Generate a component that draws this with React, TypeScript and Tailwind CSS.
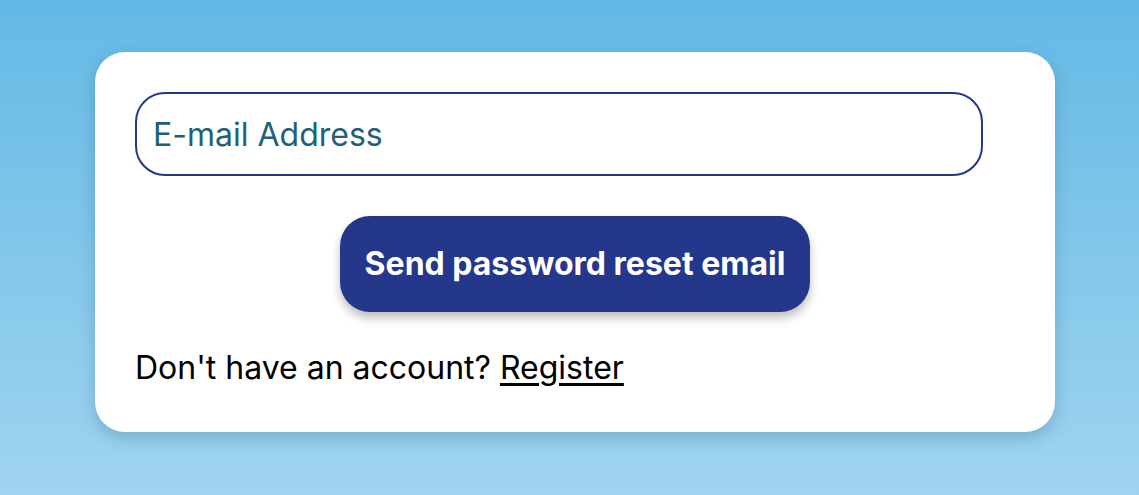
import React from 'react';

export default function App() {
  return (
    <div
      className="w-full min-h-screen h-[495px] bg-gradient-to-b from-[#62b9e5] to-[#9fd4ef] pt-[52px] pl-[95px]"
      style={{ fontFamily: 'Inter, "Noto Sans", sans-serif' }}
    >
      <div className="w-[960px] bg-white rounded-[30px] shadow-[0_6px_16px_rgba(30,70,110,0.25)] px-10 pt-10 pb-10 flex flex-col">
        <input
          type="email"
          placeholder="E-mail Address"
          className="w-[848px] h-[84px] rounded-[30px] border-2 border-[#24378a] px-4 text-[32px] text-[#1f5f7a] placeholder:text-[#216079] outline-none"
        />
        <div className="flex justify-center mt-10">
          <button className="h-[96px] px-[25px] rounded-[30px] bg-[#24378a] text-white text-[32px] font-bold shadow-[0_6px_10px_rgba(0,0,0,0.25)]">
            Send password reset email
          </button>
        </div>
        <p className="mt-[32px] text-[32px] leading-[48px] text-black">
          Don't have an account?{' '}
          <a href="#" className="underline underline-offset-[4px]">
            Register
          </a>
        </p>
      </div>
    </div>
  );
}
